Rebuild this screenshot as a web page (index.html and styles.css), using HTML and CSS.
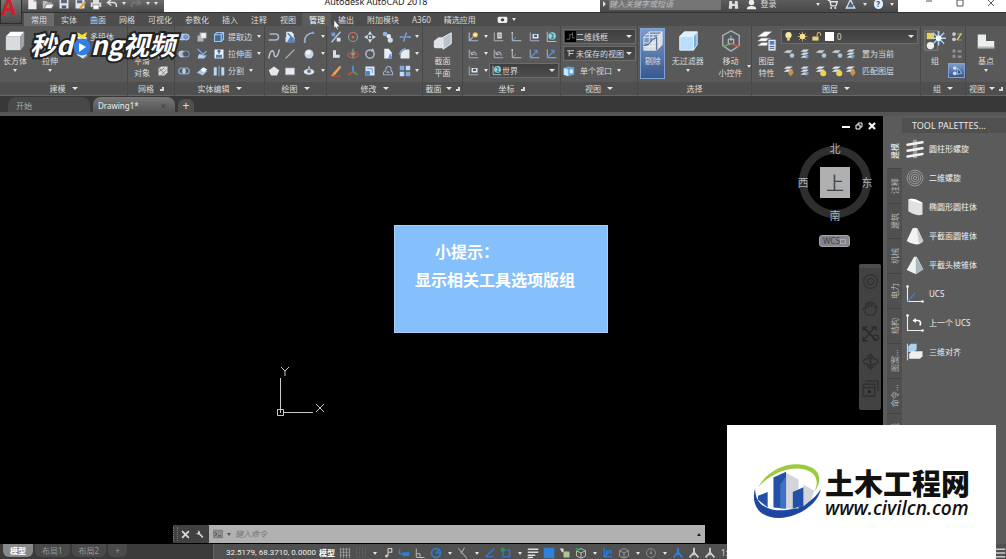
FILE: index.html
```html
<!DOCTYPE html>
<html lang="zh-CN">
<head>
    <meta charset="UTF-8">
    <meta name="viewport" content="width=device-width, initial-scale=1.0">
    <title>Autodesk AutoCAD 2018</title>
    <link rel="stylesheet" href="styles.css">
</head>
<body>
    <!-- icon sprite -->
    <svg class="sprite" xmlns="http://www.w3.org/2000/svg">
        <symbol id="new" viewBox="0 0 16 16"><path d="M3 1h7l4 4v10H3z" fill="#eee"/><path d="M10 1v4h4" fill="#aaa"/></symbol>
        <symbol id="open" viewBox="0 0 16 16"><path d="M1 4h5l2 2h5v8H1z" fill="#bbb"/><path d="M3 14l3-6h10l-3 6z" fill="#f2f2f2" stroke="#666"/></symbol>
        <symbol id="save" viewBox="0 0 16 16"><path d="M2 2h12v12H2z" fill="#dce6f0"/><path d="M4 2h8v5H4z" fill="#667"/><path d="M5 10h6v4H5z" fill="#557"/></symbol>
        <symbol id="saveas" viewBox="0 0 16 16"><path d="M2 2h12v12H2z" fill="#dce6f0"/><path d="M4 3h7v4H4z" fill="#667"/><path d="M7 13l7-9 2 2-7 9z" fill="#e5a437"/></symbol>
        <symbol id="print" viewBox="0 0 16 16"><path d="M4 1h8v5H4zM1 6h14v6H1z" fill="#ddd"/><path d="M4 9h8v6H4z" fill="#fff" stroke="#777"/></symbol>
        <symbol id="undo" viewBox="0 0 16 16"><path d="M3 6h7q4 0 4 6M7 2L2 6l5 4" fill="none" stroke="#ddd" stroke-width="2"/></symbol>
        <symbol id="redo" viewBox="0 0 16 16"><path d="M13 6H6q-4 0-4 6M9 2l5 4-5 4" fill="none" stroke="#777" stroke-width="2"/></symbol>
        <symbol id="find" viewBox="0 0 16 16"><path d="M2 3h4v4h4V3h4l1 11h-5v-4H6v4H1z" fill="#ddd"/></symbol>
        <symbol id="user" viewBox="0 0 16 16"><circle cx="8" cy="5" r="4" fill="#eee"/><path d="M1 15q0-5 7-5t7 5z" fill="#eee"/></symbol>
        <symbol id="cart" viewBox="0 0 16 16"><path d="M1 2h3l2 8h7l2-6H5" fill="none" stroke="#dfe6f2" stroke-width="2"/><circle cx="6" cy="13" r="1.5" fill="#dfe6f2"/><circle cx="12" cy="13" r="1.5" fill="#dfe6f2"/></symbol>
        <symbol id="a360" viewBox="0 0 16 16"><path d="M8 1l6 12H2z" fill="none" stroke="#cfdcf0" stroke-width="2"/><path d="M5 11l8-3" stroke="#3e73c4" stroke-width="2"/></symbol>
        <symbol id="cam" viewBox="0 0 16 16"><rect x="1" y="4" width="14" height="9" rx="2" fill="#eee"/><circle cx="8" cy="8.500" r="2.500" fill="#444"/></symbol>
        <symbol id="cube" viewBox="0 0 24 24"><path d="M2 7l5-5h15l-4 5z" fill="#fff"/><path d="M2 7h16v15H2z" fill="#d9dcdf"/><path d="M18 7l4-5v15l-4 5z" fill="#9da3a9"/></symbol>
        <symbol id="extrude" viewBox="0 0 24 24"><path d="M4 12l6-4h10l-5 4z" fill="#fff"/><path d="M4 12h11v9H4z" fill="#d9dcdf"/><path d="M15 12l5-4v9l-5 4z" fill="#9da3a9"/><path d="M12 8V1" stroke="#6fa8e8" stroke-width="2"/></symbol>
        <symbol id="solid" viewBox="0 0 16 16"><path d="M1 9l5-4 9 4-6 5z" fill="#e9edf0"/><path d="M9 14l6-5v3l-6 3z" fill="#8e979f"/></symbol>
        <symbol id="mesh" viewBox="0 0 16 16"><path d="M2 4l4-2h8v8l-4 4H2z" fill="#d8dcdf"/><path d="M2 9l8-5M5 14l8-8M3 4l8 9" stroke="#777"/></symbol>
        <symbol id="union" viewBox="0 0 16 16"><rect x="1" y="4" width="9" height="8" rx="4" fill="#9cb7da" stroke="#dce8f7"/><rect x="6" y="4" width="9" height="8" rx="4" fill="#6f97cc" stroke="#dce8f7"/></symbol>
        <symbol id="subtract" viewBox="0 0 16 16"><rect x="1" y="4" width="9" height="8" rx="4" fill="#aebfd6" stroke="#dce8f7"/><rect x="6" y="4" width="9" height="8" rx="4" fill="#555" stroke="#8fb0dc"/></symbol>
        <symbol id="intersect" viewBox="0 0 16 16"><rect x="1" y="4" width="9" height="8" rx="4" fill="none" stroke="#8fb0dc" stroke-width="1.500"/><rect x="6" y="4" width="9" height="8" rx="4" fill="none" stroke="#8fb0dc" stroke-width="1.500"/><path d="M8 5v6" stroke="#dce8f7" stroke-width="2"/></symbol>
        <symbol id="interfere" viewBox="0 0 16 16"><path d="M5 2h9v8h-4v4H2V6h3z" fill="#aeb6bf"/><path d="M7 3h6v6H7z" fill="#f1f3f5"/></symbol>
        <symbol id="slice" viewBox="0 0 16 16"><path d="M2 14l2-6 10 2-3 4z" fill="#b8d2ee"/><path d="M2 1l10 10M14 4l-5 5" stroke="#6fa2de" stroke-width="2"/></symbol>
        <symbol id="thicken" viewBox="0 0 16 16"><path d="M1 10l6-4 8 2-6 6z" fill="#a7c8ea"/><path d="M6 6l4-3 5 3-5 4z" fill="#f1f5fa"/></symbol>
        <symbol id="edge" viewBox="0 0 16 16"><path d="M2 5l3-3h9v9l-3 3H2zM2 5h9v9M11 5l3-3" fill="#456a96" stroke="#9fc4ee" stroke-width="1.500"/></symbol>
        <symbol id="face" viewBox="0 0 16 16"><path d="M2 2h12v12H2z" fill="#e8eef5"/><path d="M4 9h8v4H4z" fill="#4e80bf"/><path d="M8 8V3M6 5l2-2 2 2" stroke="#345f9b" stroke-width="1.500" fill="none"/></symbol>
        <symbol id="split" viewBox="0 0 16 16"><path d="M1 3h4v11H1zM11 3h4v11h-4z" fill="#b9d7f5"/><path d="M8 1v14" stroke="#79a9df" stroke-width="1.500"/></symbol>
        <symbol id="pline" viewBox="0 0 16 16"><path d="M2 4h8q4 0 4 4t-4 4H1" fill="none" stroke="#a8b8cb" stroke-width="2"/></symbol>
        <symbol id="hatch" viewBox="0 0 16 16"><path d="M3 1h7l3 3v4H3z" fill="#e4ecf5"/><path d="M5 3l5 5" stroke="#3d79c8" stroke-width="2"/><path d="M2 8h12v7H2z" fill="#d3e3f5"/><path d="M4 15l4-7h4l3 7z" fill="#4c83c9"/></symbol>
        <symbol id="arc" viewBox="0 0 16 16"><path d="M2 14Q2 4 14 2" fill="none" stroke="#9fb4cf" stroke-width="2"/><path d="M1 13h3v3H1zM12 1h3v3h-3z" fill="#7da4d6"/></symbol>
        <symbol id="spline" viewBox="0 0 16 16"><path d="M1 14C3 0 8 3 8 8s5 6 7-6" fill="none" stroke="#b9c7d8" stroke-width="2"/></symbol>
        <symbol id="line" viewBox="0 0 16 16"><path d="M2 14L14 2" stroke="#a9b3be" stroke-width="1.500"/></symbol>
        <symbol id="ball" viewBox="0 0 16 16"><circle cx="8" cy="8" r="6" fill="#c8d5e4"/><circle cx="7" cy="6" r="3" fill="#f1f5f9"/></symbol>
        <symbol id="poly" viewBox="0 0 16 16"><path d="M8 2l7 5-3 7H4L1 7z" fill="#e4e8ec"/></symbol>
        <symbol id="rect" viewBox="0 0 16 16"><path d="M2 4h12v9H2z" fill="#e8ebee" stroke="#aab"/></symbol>
        <symbol id="ellipse" viewBox="0 0 16 16"><ellipse cx="8" cy="9" rx="7" ry="4" fill="#dfe6ee"/><circle cx="8" cy="8" r="2.500" fill="#587493"/><path d="M8 2v3" stroke="#ddd" stroke-width="2"/></symbol>
        <symbol id="trim" viewBox="0 0 16 16"><path d="M14 1L2 15" stroke="#a9c4e5" stroke-width="2"/><path d="M2 2h5v5H2z" fill="#6f9ed8"/><path d="M9 9h5v5H9z" fill="#dce6f2"/></symbol>
        <symbol id="rotate3" viewBox="0 0 16 16"><circle cx="8" cy="8" r="6" fill="none" stroke="#84a0a5" stroke-width="1.500"/><path d="M3 4a6 6 0 0 1 9 0" fill="none" stroke="#cf5848" stroke-width="1.500"/><circle cx="8" cy="8" r="2" fill="#c86a5a"/></symbol>
        <symbol id="move" viewBox="0 0 16 16"><path d="M8 0l3 5H5zM8 16l3-5H5zM0 8l5-3v6zM16 8l-5-3v6z" fill="#c7dbf3"/><circle cx="8" cy="8" r="1.500" fill="#c7dbf3"/></symbol>
        <symbol id="copy" viewBox="0 0 16 16"><circle cx="4" cy="4" r="3" fill="#8eb6e6"/><circle cx="9" cy="7" r="3" fill="#e2e9f1"/><circle cx="11" cy="12" r="3.500" fill="#d2dae3"/></symbol>
        <symbol id="break" viewBox="0 0 16 16"><path d="M1 8h5M10 8h6M10 2L6 14" fill="none" stroke="#7ea5d6" stroke-width="2"/></symbol>
        <symbol id="erase" viewBox="0 0 16 16"><path d="M4 3v10h9V9H8V3z" fill="#d5e1f0"/></symbol>
        <symbol id="gizmo" viewBox="0 0 16 16"><ellipse cx="8" cy="9" rx="7" ry="4" fill="none" stroke="#c55d50" stroke-width="1.500"/><path d="M8 1v13" stroke="#70a36d" stroke-width="2"/><path d="M5 8h6" stroke="#e08a7e" stroke-width="2"/></symbol>
        <symbol id="ring" viewBox="0 0 16 16"><circle cx="8" cy="8" r="5.500" fill="none" stroke="#a9bbcf" stroke-width="2"/><path d="M11 0l3 4-5 1z" fill="#a9bbcf"/></symbol>
        <symbol id="mirror" viewBox="0 0 16 16"><path d="M3 1h6l4 5v8H3z" fill="#e8eef5"/><path d="M8 14l3-7 3 7z" fill="#5d93d6"/></symbol>
        <symbol id="fillet" viewBox="0 0 16 16"><path d="M2 14V9q1-6 8-7h4v12z" fill="#e6e9ed"/><path d="M1 9q1-7 8-8" fill="none" stroke="#7fa9dc" stroke-width="2"/></symbol>
        <symbol id="pencil" viewBox="0 0 16 16"><path d="M3 12L13 1l2 2L6 14z" fill="#e6ab4c"/><path d="M1 15h13M3 12l3 2-4 1z" stroke="#d54c38" fill="#fff"/></symbol>
        <symbol id="axes" viewBox="0 0 16 16"><path d="M8 9V1" stroke="#4c8fd2" stroke-width="2.500"/><path d="M8 9l-6 4" stroke="#c64c3e" stroke-width="2.500"/><path d="M8 9l6 4" stroke="#5a9c4f" stroke-width="2.500"/></symbol>
        <symbol id="scale" viewBox="0 0 16 16"><path d="M2 2h12v12H2z" fill="#dae8f7"/><path d="M2 8h6v6H2z" fill="#4f84c6"/><path d="M4 5h7v6" fill="none" stroke="#4f84c6"/></symbol>
        <symbol id="offset" viewBox="0 0 16 16"><path d="M2 13q-1-4 3-5 0-6 4-6t3 6q3 1 2 5z" fill="none" stroke="#9db0c8" stroke-width="1.500"/><path d="M6 10q2-4 4 0z" fill="none" stroke="#9db0c8"/></symbol>
        <symbol id="array" viewBox="0 0 16 16"><path d="M1 1h6v6H1zM9 9h6v6H9z" fill="#7cabe6"/><path d="M9 1h6v6H9zM1 9h6v6H1z" fill="#c3dbf5"/></symbol>
        <symbol id="section" viewBox="0 0 24 24"><path d="M2 12l5-4h10v9l-4 3H4q-2 0-2-2z" fill="#dfe2e5"/><path d="M12 8l9-5v12l-9 6z" fill="#b9c3cd" stroke="#eef1f4"/></symbol>
        <symbol id="ucs" viewBox="0 0 16 16"><path d="M3 2v11h12" fill="none" stroke="#b8c1cb" stroke-width="1.300"/><path d="M3 13l5-5" stroke="#6f9fd4" stroke-width="1.300"/><circle cx="3" cy="2.500" r="1.200" fill="#ccc"/></symbol>
        <symbol id="ucs-star" viewBox="0 0 16 16"><path d="M3 2v11h12M3 13l5-5" fill="none" stroke="#9fb8d6" stroke-width="1.500"/><circle cx="11" cy="5" r="3.500" fill="#f0c458"/><circle cx="11" cy="5" r="1.500" fill="#fff"/></symbol>
        <symbol id="ucs-turn" viewBox="0 0 16 16"><path d="M3 2v11h12" fill="none" stroke="#a9b3be" stroke-width="1.300"/><path d="M6 8q2-5 6-1v3M5 5l1 4 4-1" fill="none" stroke="#b8c4d2" stroke-width="1.300"/></symbol>
        <symbol id="ucs-view" viewBox="0 0 16 16"><path d="M3 2v11h12" fill="none" stroke="#a9b3be" stroke-width="1.300"/><path d="M6 4h8v6H6z" fill="#e2e6ea"/><path d="M8 5h4v3H8z" fill="#365f93"/></symbol>
        <symbol id="ucs-page" viewBox="0 0 16 16"><path d="M3 2v11h12" fill="none" stroke="#a9b3be" stroke-width="1.300"/><path d="M7 2h6v8H7z" fill="#d9dde1"/><path d="M8 5h4M8 7h4" stroke="#777"/></symbol>
        <symbol id="ucs-globe" viewBox="0 0 16 16"><path d="M3 1v13h12" fill="none" stroke="#b8c1cb" stroke-width="1.300"/><circle cx="9.500" cy="6.500" r="5" fill="#8ed2dc"/><path d="M7 3l4 2-2 5 3-1" fill="none" stroke="#35808a" stroke-width="1.500"/></symbol>
        <symbol id="ucs-blue" viewBox="0 0 16 16"><path d="M3 2v11h12" fill="none" stroke="#a9b3be" stroke-width="1.300"/><path d="M3 13l9-9M8 3h4v4" fill="none" stroke="#5a94dd" stroke-width="1.500"/></symbol>
        <symbol id="wire" viewBox="0 0 16 16"><path d="M0 0h16v16H0z" fill="#000"/><path d="M2 12h5V5h4M11 2v8h3" fill="none" stroke="#888"/></symbol>
        <symbol id="view" viewBox="0 0 16 16"><path d="M0 0h16v16H0z" fill="#3c3c3c"/><path d="M3 4h10M6 4v8M6 8h6" fill="none" stroke="#ccc" stroke-width="1.500"/></symbol>
        <symbol id="viewport" viewBox="0 0 16 16"><path d="M1 4l6-2 8 1v10l-8 2-6-2z" fill="#5ca9df"/><path d="M1 4l6 2v9l-6-2z" fill="#c6e7fa"/><path d="M9 6h4v5H9z" fill="#e9f6ff"/></symbol>
        <symbol id="cull" viewBox="0 0 24 24"><path d="M2 8l6-6h14v14l-6 6H2z" fill="#7f97bd"/><path d="M2 22V17l5-1 4-5 5-3 6-6v14l-6 6z" fill="#d4d8dd"/><path d="M2 8h14v14H2zM2 8l6-6h14v14l-6 6M16 8l6-6M8 2v20M12 5v17M2 14h14l6-6M4 5h15v14M2 18h14" fill="none" stroke="#eef3f9" stroke-width=".8"/><path d="M16 8v14M2 17l5-1 4-5 5-3" fill="none" stroke="#334f7c"/></symbol>
        <symbol id="nofilter" viewBox="0 0 24 24"><path d="M3 7l5-5h14l-4 5z" fill="#d8f0ff"/><path d="M3 7h15v15H3z" fill="#b9defa"/><path d="M18 7l4-5v14l-4 6z" fill="#79add9"/><path d="M3 7h15v15H3zM3 7l5-5h14v14l-4 6M18 7l4-5" fill="none" stroke="#eef8ff"/></symbol>
        <symbol id="gizmo-big" viewBox="0 0 24 24"><path d="M12 1l9 5v11l-9 6-9-6V6z" fill="none" stroke="#aab2ba" stroke-width="1.500"/><path d="M12 12V6" stroke="#77a7df" stroke-width="1.500"/><path d="M9 10h6v5H9z" fill="none" stroke="#ddd"/><path d="M12 15l-9 3" stroke="#6ca461" stroke-width="2"/><path d="M12 15l9 3" stroke="#c75a48" stroke-width="2"/></symbol>
        <symbol id="layers" viewBox="0 0 24 24"><path d="M2 7l7-5h8l-6 5zM2 12l4-3h10l-5 3zM2 17l4-3h10l-5 3z" fill="#fff" stroke="#bbb" stroke-width=".5"/><path d="M13 10h9v13h-9z" fill="#dce8f5" stroke="#555"/><path d="M15 12h5v4h-5z" fill="#4c83c3"/><path d="M15 18h5M15 20h5" stroke="#557"/></symbol>
        <symbol id="bulb" viewBox="0 0 16 16"><circle cx="8" cy="6" r="4.500" fill="#f8e79c"/><path d="M6 9h4v5H6z" fill="#d6cba0"/></symbol>
        <symbol id="sun" viewBox="0 0 16 16"><path d="M8 1v14M1 8h14M3 3l10 10M13 3L3 13" stroke="#d8c77a"/><circle cx="8" cy="8" r="4" fill="#f7e28a"/></symbol>
        <symbol id="lock" viewBox="0 0 16 16"><path d="M2 8h9v6H2z" fill="#e9cf79"/><path d="M9 8V4q2-4 5 0v3" fill="none" stroke="#cbb975" stroke-width="1.500"/></symbol>
        <symbol id="lay-a" viewBox="0 0 16 16"><path d="M1 6l4-3h8l-4 4z" fill="#c3c9cf"/><circle cx="12" cy="10" r="3" fill="#a9c8e6"/></symbol>
        <symbol id="lay-b" viewBox="0 0 16 16"><path d="M2 5l4-3h7l-3 3zM2 9l4-3h7l-3 3zM2 13l4-3h7l-3 3z" fill="#d6dee7"/><path d="M9 7l4 5-4 3z" fill="#6a9ed8"/></symbol>
        <symbol id="lay-c" viewBox="0 0 16 16"><path d="M1 5l4-3h8l-4 3zM1 9l4-3h8l-4 3z" fill="#e3e6e9"/><circle cx="11" cy="11" r="4" fill="#e9d552"/></symbol>
        <symbol id="lay-d" viewBox="0 0 16 16"><path d="M1 5l4-3h8l-4 3zM1 9l4-3h8l-4 3z" fill="#e3e6e9"/><path d="M8 7h5l1 4-4 4-3-4z" fill="#cf9048"/></symbol>
        <symbol id="group" viewBox="0 0 24 24"><path d="M1 1h14v21H1z" fill="#555" stroke="#8a8a8a"/><path d="M3 3h8v7H3z" fill="#e8cf63"/><circle cx="7" cy="17" r="4" fill="#eef1f4"/><path d="M16 1v16M8 9h16M10 3l12 12M22 3L10 15" stroke="#a5d3fb" stroke-width="1.500"/><circle cx="16" cy="9" r="3" fill="#fff"/></symbol>
        <symbol id="ungroup" viewBox="0 0 16 16"><circle cx="4" cy="4" r="2.500" fill="#c9cdd1"/><circle cx="4" cy="11" r="2.500" fill="#c9cdd1"/><path d="M8 12l6-9" stroke="#dcc65e" stroke-width="2"/><path d="M8 4h5M9 12h5" stroke="#aaa"/></symbol>
        <symbol id="groupedit" viewBox="0 0 16 16"><path d="M2 2h4v4H2zM2 9h4v4H2zM9 3h5v3H9zM9 10h5v3H9z" fill="#8c939a"/></symbol>
        <symbol id="groupsel" viewBox="0 0 16 16"><circle cx="5" cy="4" r="2.500" fill="#bfe0ff"/><circle cx="5" cy="11" r="2.500" fill="#bfe0ff"/><path d="M9 4l5 7-3 0-2 2z" fill="#16324f" stroke="#cce6ff"/></symbol>
        <symbol id="base" viewBox="0 0 24 24"><path d="M3 5h9v7h9v8H3z" fill="#eceded"/><path d="M3 18h18v2H3z" fill="#b5b8bb"/></symbol>
        <symbol id="helix" viewBox="0 0 24 24"><path d="M12 1v22" stroke="#9a9a9a" stroke-width="5"/><path d="M3 7l18-3M3 14l18-3M3 21l18-3" stroke="#f3f3f3" stroke-width="3" stroke-linecap="round"/></symbol>
        <symbol id="spiral" viewBox="0 0 24 24"><g fill="none" stroke="#a3a5a6"><circle cx="12" cy="12" r="9.500"/><circle cx="12" cy="12" r="7"/><circle cx="12" cy="12" r="4.500"/><circle cx="12" cy="12" r="2"/></g></symbol>
        <symbol id="cylinder" viewBox="0 0 24 24"><path d="M4 3q4-2 9 0t8 4v14q-4 2-9 0t-8-4z" fill="#dfe1e3"/><path d="M4 3q4-2 9 0t8 4q-4 1-9-1T4 3z" fill="#fff"/></symbol>
        <symbol id="cone" viewBox="0 0 24 24"><path d="M9 3q3-2 6 0l7 15q-4 5-10 4T2 18z" fill="#f0f1f1"/><path d="M14 3l8 15-5 3z" fill="#c6c9cb"/></symbol>
        <symbol id="pyramid" viewBox="0 0 24 24"><path d="M11 2L2 18l11 5 9-6L14 2z" fill="#eef1f1"/><path d="M13 2l0 21 9-6z" fill="#aab8bd"/></symbol>
        <symbol id="ucs-big" viewBox="0 0 24 24"><path d="M3 2v19h19" fill="none" stroke="#eee" stroke-width="1.300"/><path d="M3 21l9-10" stroke="#4d7dc7" stroke-width="1.500"/><circle cx="3" cy="3" r="1.500" fill="#fff"/><circle cx="21" cy="21" r="1.500" fill="#fff"/></symbol>
        <symbol id="ucs-prev" viewBox="0 0 24 24"><path d="M3 2v19h19" fill="none" stroke="#eee" stroke-width="1.300"/><path d="M12 9h4q4 1 2 6" fill="none" stroke="#fff" stroke-width="2"/><path d="M9 9l4-3v6z" fill="#fff"/><circle cx="3" cy="3" r="1.500" fill="#fff"/><circle cx="21" cy="21" r="1.500" fill="#fff"/></symbol>
        <symbol id="align3" viewBox="0 0 24 24"><path d="M3 2v20" stroke="#ccc" stroke-width="1.500"/><path d="M4 5l3-3h7v7l-3 3H4z" fill="#a7d0f2"/><path d="M5 14l3-3h13v6l-3 3H5z" fill="#eceef0"/></symbol>
        <symbol id="wheel" viewBox="0 0 16 16"><g fill="none" stroke="#303030" stroke-width="1.200"><circle cx="8" cy="8" r="6.500"/><circle cx="8" cy="8" r="3"/></g></symbol>
        <symbol id="pan" viewBox="0 0 16 16"><path d="M4 14L1 8l2-1 1 2V3h2v4l1-5h2v5l1-4h2v4l2-1-1 5-2 3z" fill="none" stroke="#303030" stroke-width="1.200"/></symbol>
        <symbol id="zoomx" viewBox="0 0 16 16"><path d="M2 2l11 11M12 1L2 13M1 5V1h4M9 1h4v3M1 10v4h4" fill="none" stroke="#2b2b2b" stroke-width="1.500"/><circle cx="13" cy="11" r="2.500" fill="none" stroke="#2b2b2b"/></symbol>
        <symbol id="orbit" viewBox="0 0 16 16"><path d="M8 1v14M5 4l3-3 3 3M5 12l3 3 3-3" fill="none" stroke="#303030" stroke-width="1.500"/><ellipse cx="8" cy="8" rx="7" ry="3" fill="none" stroke="#303030" stroke-width="1.300"/></symbol>
        <symbol id="motion" viewBox="0 0 16 16"><path d="M1 4h11v11H1zM3 1h12v9M1 7h11" fill="none" stroke="#303030" stroke-width="1.300"/><circle cx="7" cy="11" r="1.500" fill="#222"/></symbol>
        <symbol id="wrench" viewBox="0 0 16 16"><path d="M2 5a4 4 0 0 0 5 3l6 6 2-2-6-6A4 4 0 0 0 5 1l1 3-2 2z" fill="#d5d5d5"/></symbol>
        <symbol id="prompt" viewBox="0 0 16 16"><path d="M1 2h14v12H1z" fill="#8e8e8e" stroke="#666"/><path d="M3 5l3 3-3 3M8 11h5" fill="none" stroke="#444" stroke-width="1.500"/></symbol>
        <symbol id="grid" viewBox="0 0 16 16"><path d="M2 1v14M6 1v14M10 1v14M14 1v14M1 3h14M1 7h14M1 11h14" stroke="#a0a0a0"/></symbol>
        <symbol id="snap" viewBox="0 0 16 16"><path d="M2 1v14M6 1v14M10 1v14M14 1v14" stroke="#7d7d7d" stroke-dasharray="1 2"/></symbol>
        <symbol id="infer" viewBox="0 0 16 16"><path d="M8 2v10M8 2h5v5H8" fill="none" stroke="#ccc" stroke-width="1.500"/><circle cx="6" cy="12" r="2" fill="#ccc"/></symbol>
        <symbol id="dyn" viewBox="0 0 16 16"><path d="M2 3v6h4" fill="none" stroke="#2a7fd6" stroke-width="2"/><path d="M6 7h9v5H6z" fill="#2a7fd6"/></symbol>
        <symbol id="ortho" viewBox="0 0 16 16"><path d="M3 2v12h11M3 9h5v5" fill="none" stroke="#bbb" stroke-width="1.300"/></symbol>
        <symbol id="polar" viewBox="0 0 16 16"><circle cx="8" cy="8" r="6" fill="none" stroke="#2a80dc" stroke-width="2"/><path d="M8 8l5-5M8 8h6" stroke="#2a80dc" stroke-width="1.500"/></symbol>
        <symbol id="iso" viewBox="0 0 16 16"><path d="M2 2l11 13M10 1L5 9" stroke="#aaa" stroke-width="1.500"/></symbol>
        <symbol id="track" viewBox="0 0 16 16"><path d="M2 13L14 2M2 13h11" stroke="#2a80dc" stroke-width="1.500"/></symbol>
        <symbol id="osnap" viewBox="0 0 16 16"><path d="M4 4h9v9H4z" fill="none" stroke="#2a80dc" stroke-width="1.500"/><path d="M1 1h5v5H1z" fill="#2f9447"/></symbol>
        <symbol id="lwt" viewBox="0 0 16 16"><path d="M1 3h14M1 7h14M1 11h10M1 14h7" stroke="#ddd" stroke-width="2"/></symbol>
        <symbol id="transp" viewBox="0 0 16 16"><path d="M1 1h14v14H1z" fill="#2f80d8"/></symbol>
        <symbol id="cycle" viewBox="0 0 16 16"><path d="M6 6h8v8H6z" fill="#a5c987"/><path d="M1 2h5v5H4z" fill="#ddd"/></symbol>
        <symbol id="osnap3" viewBox="0 0 16 16"><path d="M8 2l6 3v7l-6 3-6-3V5zM2 5l6 3 6-3M8 8v7" fill="none" stroke="#bbb" stroke-width="1.300"/><path d="M1 1h4v4H1z" fill="#2f9447"/></symbol>
        <symbol id="ducs" viewBox="0 0 16 16"><path d="M3 1v12h11M6 10V5h6v5M3 13l6-6" fill="none" stroke="#2a80dc" stroke-width="1.500"/></symbol>
        <symbol id="filter" viewBox="0 0 16 16"><path d="M8 2l6 3v7l-6 3-6-3V5zM2 5l6 3 6-3M8 8v7" fill="none" stroke="#999" stroke-width="1.300"/></symbol>
        <symbol id="gizmo-s" viewBox="0 0 16 16"><circle cx="8" cy="8" r="6" fill="none" stroke="#999"/><path d="M8 8V2" stroke="#c55" stroke-width="1.500"/><circle cx="8" cy="8" r="1.500" fill="#6a6"/></symbol>
        <symbol id="anno" viewBox="0 0 16 16"><path d="M8 1v6L2 14M8 7l6 7M8 7v4" fill="none" stroke="currentColor" stroke-width="2.500"/></symbol>
        <symbol id="menu" viewBox="0 0 16 16"><path d="M1 3h14M1 8h14M1 13h14" stroke="#ccc" stroke-width="2"/></symbol>
    </svg>

    <header class="titlebar">
        <button class="app-button" aria-label="应用程序菜单">A</button>
        <div class="quick">
            <button class="ico" aria-label="新建"><svg><use href="#new"/></svg></button>
            <button class="ico" aria-label="打开"><svg><use href="#open"/></svg></button>
            <button class="ico" aria-label="保存"><svg><use href="#save"/></svg></button>
            <button class="ico" aria-label="另存为"><svg><use href="#saveas"/></svg></button>
            <button class="ico" aria-label="打印"><svg><use href="#print"/></svg></button>
            <button class="ico" aria-label="放弃"><svg><use href="#undo"/></svg></button>
            <span class="arrow"></span>
            <button class="ico" aria-label="重做"><svg><use href="#redo"/></svg></button>
            <span class="arrow"></span>
            <span class="arrow"></span>
        </div>
        <h1 class="app-title">Autodesk AutoCAD 2018</h1>
        <div class="info">
            <span class="play"></span>
            <input class="search" type="text" placeholder="键入关键字或短语" aria-label="搜索">
            <button class="ico" aria-label="查找"><svg><use href="#find"/></svg></button>
            <button class="login"><svg><use href="#user"/></svg>登录</button>
            <span class="arrow"></span>
            <button class="ico" aria-label="购物车"><svg><use href="#cart"/></svg></button>
            <button class="ico" aria-label="保持连接"><svg><use href="#a360"/></svg></button>
            <span class="arrow"></span>
            <button class="help" aria-label="帮助">?</button>
            <span class="arrow"></span>
        </div>
        <div class="window-buttons">
            <button aria-label="最小化"><svg viewBox="0 0 8 8"><path d="M1 2h6" stroke="#555"/></svg></button>
            <button aria-label="最大化"><svg viewBox="0 0 8 8"><path d="M1 1h6v6H1z" fill="none" stroke="#555"/></svg></button>
            <button aria-label="关闭"><svg viewBox="0 0 8 8"><path d="M1 1l6 6M7 1L1 7" stroke="#555"/></svg></button>
        </div>
    </header>

    <nav class="ribbon-tabs">
        <a class="active" href="#">常用</a>
        <a href="#">实体</a>
        <a href="#">曲面</a>
        <a href="#">网格</a>
        <a href="#">可视化</a>
        <a href="#">参数化</a>
        <a href="#">插入</a>
        <a href="#">注释</a>
        <a href="#">视图</a>
        <a class="hover" href="#">管理</a>
        <a href="#">输出</a>
        <a href="#">附加模块</a>
        <a href="#">A360</a>
        <a href="#">精选应用</a>
        <button class="cam" aria-label="录制"><svg><use href="#cam"/></svg><span class="arrow"></span></button>
        <svg class="cursor" viewBox="0 0 8 12"><path d="M1 0v10l2-2 2 4 1-1-1-3h3z" fill="#fff" stroke="#333" stroke-width=".5"/></svg>
    </nav>

    <section class="ribbon">
        <div class="panel modeling">
            <div class="panel-body">
                <button class="big"><svg><use href="#cube"/></svg>长方体<span class="arrow"></span></button>
                <button class="big"><svg><use href="#extrude"/></svg>拉伸<span class="arrow"></span></button>
                <div class="tools">
                    <button class="ico" aria-label="多段体图标"><svg><use href="#solid"/></svg></button>
                    <button class="text">多段体</button>
                    <button class="ico" aria-label="按住并拖动"><svg><use href="#solid"/></svg></button>
                </div>
            </div>
            <h2>建模<span class="arrow"></span></h2>
        </div>
        <div class="panel mesh">
            <div class="panel-body">
                <button class="big"><svg><use href="#mesh"/></svg>平滑<br>对象</button>
                <div class="tools">
                    <button class="ico" aria-label="提高平滑度"><svg><use href="#mesh"/></svg></button>
                    <button class="ico" aria-label="降低平滑度"><svg><use href="#mesh"/></svg></button>
                    <button class="ico" aria-label="优化网格"><svg><use href="#mesh"/></svg></button>
                </div>
            </div>
            <h2>网格<span class="launch"></span></h2>
        </div>
        <div class="panel solid-edit">
            <div class="panel-body tools">
                <button class="ico" aria-label="并集"><svg><use href="#union"/></svg></button>
                <button class="ico" aria-label="干涉"><svg><use href="#interfere"/></svg></button>
                <button class="ico" aria-label="边"><svg><use href="#edge"/></svg></button>
                <button class="text">提取边<span class="arrow"></span></button>
                <button class="ico" aria-label="差集"><svg><use href="#subtract"/></svg></button>
                <button class="ico" aria-label="剖切"><svg><use href="#slice"/></svg></button>
                <button class="ico" aria-label="面"><svg><use href="#face"/></svg></button>
                <button class="text">拉伸面<span class="arrow"></span></button>
                <button class="ico" aria-label="交集"><svg><use href="#intersect"/></svg></button>
                <button class="ico" aria-label="加厚"><svg><use href="#thicken"/></svg></button>
                <button class="ico" aria-label="实体"><svg><use href="#split"/></svg></button>
                <button class="text">分割<span class="arrow"></span></button>
            </div>
            <h2>实体编辑<span class="arrow"></span></h2>
        </div>
        <div class="panel draw">
            <div class="panel-body tools">
                <button class="ico" aria-label="多段线"><svg><use href="#pline"/></svg></button>
                <button class="ico" aria-label="图案填充"><svg><use href="#hatch"/></svg></button>
                <button class="ico" aria-label="圆弧"><svg><use href="#arc"/></svg></button>
                <span class="arrow"></span>
                <button class="ico" aria-label="样条曲线"><svg><use href="#spline"/></svg></button>
                <button class="ico" aria-label="直线"><svg><use href="#line"/></svg></button>
                <button class="ico" aria-label="圆"><svg><use href="#ball"/></svg></button>
                <span class="arrow"></span>
                <button class="ico" aria-label="多边形"><svg><use href="#poly"/></svg></button>
                <button class="ico" aria-label="矩形"><svg><use href="#rect"/></svg></button>
                <button class="ico" aria-label="椭圆"><svg><use href="#ellipse"/></svg></button>
                <span class="arrow"></span>
            </div>
            <h2>绘图<span class="arrow"></span></h2>
        </div>
        <div class="panel modify">
            <div class="panel-body tools">
                <button class="ico" aria-label="修剪"><svg><use href="#trim"/></svg></button>
                <button class="ico" aria-label="三维旋转"><svg><use href="#rotate3"/></svg></button>
                <button class="ico" aria-label="移动"><svg><use href="#move"/></svg></button>
                <button class="ico" aria-label="复制"><svg><use href="#copy"/></svg></button>
                <button class="ico" aria-label="打断"><svg><use href="#break"/></svg></button>
                <span class="arrow"></span>
                <button class="ico" aria-label="拉伸对象"><svg><use href="#erase"/></svg></button>
                <button class="ico" aria-label="三维移动"><svg><use href="#gizmo"/></svg></button>
                <button class="ico" aria-label="旋转"><svg><use href="#ring"/></svg></button>
                <button class="ico" aria-label="镜像"><svg><use href="#mirror"/></svg></button>
                <button class="ico" aria-label="圆角"><svg><use href="#fillet"/></svg></button>
                <span class="arrow"></span>
                <button class="ico" aria-label="删除"><svg><use href="#pencil"/></svg></button>
                <button class="ico" aria-label="三维对齐工具"><svg><use href="#axes"/></svg></button>
                <button class="ico" aria-label="缩放"><svg><use href="#scale"/></svg></button>
                <button class="ico" aria-label="偏移"><svg><use href="#offset"/></svg></button>
                <button class="ico" aria-label="阵列"><svg><use href="#array"/></svg></button>
                <span class="arrow"></span>
            </div>
            <h2>修改<span class="arrow"></span></h2>
        </div>
        <div class="panel section">
            <div class="panel-body">
                <button class="big"><svg><use href="#section"/></svg>截面<br>平面</button>
            </div>
            <h2>截面<span class="arrow"></span><span class="launch"></span></h2>
        </div>
        <div class="panel coords">
            <div class="panel-body tools">
                <button class="ico" aria-label="原点"><svg><use href="#ucs-star"/></svg></button>
                <span class="arrow"></span>
                <button class="ico" aria-label="命名 UCS"><svg><use href="#ucs-page"/></svg></button>
                <button class="ico" aria-label="UCS"><svg><use href="#ucs"/></svg></button>
                <button class="ico" aria-label="视图 UCS"><svg><use href="#ucs-view"/></svg></button>
                <button class="ico" aria-label="世界 UCS"><svg><use href="#ucs-globe"/></svg></button>
                <button class="ico" aria-label="绕轴旋转"><svg><use href="#ucs-turn"/></svg></button>
                <span class="arrow"></span>
                <button class="ico" aria-label="上一个"><svg><use href="#ucs-turn"/></svg></button>
                <button class="ico" aria-label="面 UCS"><svg><use href="#ucs"/></svg></button>
                <button class="ico" aria-label="三点"><svg><use href="#ucs-blue"/></svg></button>
                <button class="ico" aria-label="Z 轴矢量"><svg><use href="#ucs-blue"/></svg></button>
                <button class="ico" aria-label="对象 UCS"><svg><use href="#ucs-view"/></svg></button>
                <span class="arrow"></span>
                <label class="drop"><svg><use href="#ucs-globe"/></svg><select aria-label="坐标系"><option>世界</option></select><span class="arrow"></span></label>
            </div>
            <h2>坐标<span class="launch"></span></h2>
        </div>
        <div class="panel view">
            <div class="panel-body tools">
                <label class="drop"><svg><use href="#wire"/></svg><select aria-label="视觉样式"><option>二维线框</option></select><span class="arrow"></span></label>
                <label class="drop"><svg><use href="#view"/></svg><select aria-label="三维导航"><option>未保存的视图</option></select><span class="arrow"></span></label>
                <button class="text"><svg><use href="#viewport"/></svg>单个视口<span class="arrow"></span></button>
            </div>
            <h2>视图<span class="arrow"></span></h2>
        </div>
        <div class="panel select">
            <div class="panel-body">
                <button class="big pressed"><svg><use href="#cull"/></svg>剔除</button>
                <button class="big"><svg><use href="#nofilter"/></svg>无过滤器<span class="arrow"></span></button>
                <button class="big"><svg><use href="#gizmo-big"/></svg>移动<br>小控件</button>
                <span class="arrow"></span>
            </div>
            <h2>选择</h2>
        </div>
        <div class="panel layer">
            <div class="panel-body">
                <button class="big"><svg><use href="#layers"/></svg>图层<br>特性</button>
                <div class="tools">
                    <label class="drop">
                        <svg><use href="#bulb"/></svg><svg><use href="#sun"/></svg><svg><use href="#lock"/></svg>
                        <span class="swatch"></span>
                        <select aria-label="图层"><option>0</option></select><span class="arrow"></span>
                    </label>
                    <button class="ico" aria-label="关闭图层"><svg><use href="#lay-a"/></svg></button>
                    <button class="ico" aria-label="隔离"><svg><use href="#lay-b"/></svg></button>
                    <button class="ico" aria-label="冻结"><svg><use href="#lay-a"/></svg></button>
                    <button class="ico" aria-label="锁定"><svg><use href="#lay-a"/></svg></button>
                    <button class="text"><svg><use href="#lay-b"/></svg>置为当前</button>
                    <button class="ico" aria-label="打开图层"><svg><use href="#lay-d"/></svg></button>
                    <button class="ico" aria-label="取消隔离"><svg><use href="#lay-b"/></svg></button>
                    <button class="ico" aria-label="解冻"><svg><use href="#lay-c"/></svg></button>
                    <button class="ico" aria-label="解锁"><svg><use href="#lay-c"/></svg></button>
                    <button class="text"><svg><use href="#lay-d"/></svg>匹配图层</button>
                </div>
            </div>
            <h2>图层<span class="arrow"></span></h2>
        </div>
        <div class="panel group">
            <div class="panel-body">
                <button class="big"><svg><use href="#group"/></svg>组</button>
                <div class="tools">
                    <button class="ico" aria-label="解除编组"><svg><use href="#ungroup"/></svg></button>
                    <button class="ico" aria-label="组编辑"><svg><use href="#groupedit"/></svg></button>
                    <button class="ico pressed" aria-label="启用组选择"><svg><use href="#groupsel"/></svg></button>
                </div>
            </div>
            <h2>组<span class="arrow"></span></h2>
        </div>
        <div class="panel base">
            <div class="panel-body">
                <button class="big"><svg><use href="#base"/></svg>基点<span class="arrow"></span></button>
            </div>
            <h2>视图<span class="arrow"></span><span class="launch"></span></h2>
        </div>
    </section>

    <nav class="file-tabs">
        <a href="#">开始</a>
        <a class="active" href="#">Drawing1*<span>✕</span></a>
        <button aria-label="新图形">+</button>
    </nav>

    <main class="workspace">
        <div class="canvas">
            <div class="doc-buttons">
                <button aria-label="最小化图形"><svg viewBox="0 0 8 8"><path d="M0 5h8" stroke="#fff" stroke-width="2"/></svg></button>
                <button aria-label="还原图形"><svg viewBox="0 0 8 8"><path d="M1 3h4v4H1zM3 3V1h4v4H5" fill="none" stroke="#fff"/></svg></button>
                <button aria-label="关闭图形"><svg viewBox="0 0 8 8"><path d="M1 1l6 6M7 1L1 7" stroke="#fff" stroke-width="2"/></svg></button>
            </div>

            <div class="viewcube">
                <span class="north">北</span>
                <span class="west">西</span>
                <button class="top">上</button>
                <span class="east">东</span>
                <span class="south">南</span>
            </div>
            <button class="wcs">WCS<span></span></button>

            <div class="navbar">
                <button aria-label="控制盘"><svg><use href="#wheel"/></svg></button>
                <button aria-label="平移"><svg><use href="#pan"/></svg></button>
                <button aria-label="范围缩放"><svg><use href="#zoomx"/></svg></button>
                <button aria-label="动态观察"><svg><use href="#orbit"/></svg></button>
                <button aria-label="运动"><svg><use href="#motion"/></svg></button>
            </div>

            <svg class="ucs-icon" viewBox="0 0 50 54">
                <path d="M5.500 12v35M9 46.500h29M2.500 43.500h6v6h-6z" fill="none" stroke="#c9c9c9"/>
                <path d="M6 1l4 4 4-4M10 5v5M41 38l8 8M49 38l-8 8" fill="none" stroke="#c9c9c9"/>
            </svg>

            <div class="hint">
                <p class="hint-title">小提示：</p>
                <p>显示相关工具选项版组</p>
            </div>

            <div class="command">
                <span class="grip"></span>
                <button aria-label="关闭命令行"><svg viewBox="0 0 8 8"><path d="M1 1l6 6M7 1L1 7" stroke="#ddd" stroke-width="1.500"/></svg></button>
                <button aria-label="自定义"><svg><use href="#wrench"/></svg></button>
                <div class="command-line">
                    <svg><use href="#prompt"/></svg>
                    <span class="arrow"></span>
                    <input type="text" placeholder="键入命令" aria-label="命令">
                    <span class="arrow up"></span>
                </div>
            </div>
        </div>

        <aside class="palette">
            <h2>TOOL PALETTES...</h2>
            <div class="palette-body">
                <nav class="palette-tabs">
                    <a class="active" href="#">建模</a>
                    <a href="#">注释</a>
                    <a href="#">建筑</a>
                    <a href="#">机械</a>
                    <a href="#">电力</a>
                    <a href="#">结构</a>
                    <a href="#">图案...</a>
                    <a href="#">命令...</a>
                    <a href="#">引线</a>
                </nav>
                <ul>
                    <li><svg><use href="#helix"/></svg>圆柱形螺旋</li>
                    <li><svg><use href="#spiral"/></svg>二维螺旋</li>
                    <li><svg><use href="#cylinder"/></svg>椭圆形圆柱体</li>
                    <li><svg><use href="#cone"/></svg>平截面圆锥体</li>
                    <li><svg><use href="#pyramid"/></svg>平截头棱锥体</li>
                    <li><svg><use href="#ucs-big"/></svg>UCS</li>
                    <li><svg><use href="#ucs-prev"/></svg>上一个 UCS</li>
                    <li><svg><use href="#align3"/></svg>三维对齐</li>
                </ul>
            </div>
        </aside>
    </main>

    <footer class="statusbar">
        <nav class="layout-tabs">
            <a class="active" href="#">模型</a>
            <a href="#">布局1</a>
            <a href="#">布局2</a>
            <a href="#">+</a>
        </nav>
        <div class="status">
            <span class="position">32.5179, 68.3710, 0.0000</span>
            <button class="model">模型</button>
            <button aria-label="栅格"><svg><use href="#grid"/></svg></button>
            <button aria-label="捕捉"><svg><use href="#snap"/></svg></button>
            <span class="arrow"></span>
            <button aria-label="推断约束"><svg><use href="#infer"/></svg></button>
            <button aria-label="动态输入"><svg><use href="#dyn"/></svg></button>
            <button aria-label="正交"><svg><use href="#ortho"/></svg></button>
            <button aria-label="极轴追踪"><svg><use href="#polar"/></svg></button>
            <span class="arrow"></span>
            <button aria-label="等轴测草图"><svg><use href="#iso"/></svg></button>
            <span class="arrow"></span>
            <button aria-label="对象捕捉追踪"><svg><use href="#track"/></svg></button>
            <button aria-label="对象捕捉"><svg><use href="#osnap"/></svg></button>
            <span class="arrow"></span>
            <button aria-label="线宽"><svg><use href="#lwt"/></svg></button>
            <button aria-label="透明度"><svg><use href="#transp"/></svg></button>
            <button aria-label="选择循环"><svg><use href="#cycle"/></svg></button>
            <button aria-label="三维对象捕捉"><svg><use href="#osnap3"/></svg></button>
            <span class="arrow"></span>
            <button aria-label="动态 UCS"><svg><use href="#ducs"/></svg></button>
            <button aria-label="选择过滤"><svg><use href="#filter"/></svg></button>
            <span class="arrow"></span>
            <button aria-label="小控件"><svg><use href="#gizmo-s"/></svg></button>
            <span class="arrow"></span>
            <button class="on" aria-label="注释可见性"><svg><use href="#anno"/></svg></button>
            <button aria-label="自动缩放"><svg><use href="#anno"/></svg></button>
            <button aria-label="注释比例"><svg><use href="#anno"/></svg></button>
            <span class="ratio">1:1</span>
            <button class="customize" aria-label="自定义状态栏"><svg><use href="#menu"/></svg></button>
        </div>
    </footer>

    <!-- video watermark -->
    <div class="watermark">
        <span>秒d</span>
        <svg viewBox="0 0 18 24"><circle cx="9" cy="15" r="8.500" fill="#2e7fe6" stroke="none"/><path d="M6 11l7 4-7 5z" fill="#fff" stroke="none"/><path d="M4 0l5 3 5-3-1 4-4 3-4-3z" fill="#f8e02c" stroke="none"/></svg>
        <span>ng视频</span>
    </div>

    <!-- site logo -->
    <div class="site-logo">
        <svg viewBox="0 0 72 60">
            <path d="M6 25C18 4 44-4 62 5c10 6 9 17 2 25 5-9 3-17-4-21C45 1 22 8 6 25z" fill="#9bcb3c"/>
            <path d="M3 26C-2 44 8 57 28 57c20-1 40-14 43-30-8 14-25 22-42 22C14 49 3 42 3 26z" fill="#1d46a0"/>
            <path d="M35 10l13 7v30H35zM53 22l11 7-3 9-8 7z" fill="#d3d5da"/>
            <path d="M22 15l13-6v38l-13-1zM6 34l10-4v16L6 38zM42 30l11-5v19l-11 3z" fill="#2450a8"/>
            <path d="M29 22l6-8v33h-6z" fill="#3d72c4"/>
        </svg>
        <div>
            <strong>土木工程网</strong>
            <a href="#">www.civilcn.com</a>
        </div>
    </div>
</body>
</html>
```
FILE: styles.css
```css
*, *::before {
    box-sizing: border-box;
}
body {
    display: flex;
    flex-direction: column;
    height: 100vh;
    margin: 0;
    overflow: hidden;
    background: #000;
    color: #dcdcdc;
    font: 8px/12px "Noto Sans", "Noto Sans CJK SC", sans-serif;
}
h1, h2, p, ul {
    margin: 0;
    padding: 0;
}
h1, h2 {
    font-weight: normal;
}
ul {
    list-style: none;
}
a {
    color: inherit;
    text-decoration: none;
}
button, input, select {
    margin: 0;
    padding: 0;
    border: none;
    background: none;
    color: inherit;
    font: inherit;
    white-space: nowrap;
}
svg {
    display: block;
    flex: none;
}
.sprite {
    position: absolute;
    width: 0;
    height: 0;
}
.arrow {
    flex: none;
    width: 0;
    height: 0;
    border: 2px solid transparent;
    border-top: 3px solid #e4e4e4;
    border-bottom: none;
}
.arrow.up {
    border-top: none;
    border-bottom: 3px solid #222;
}
.launch {
    width: 4px;
    height: 4px;
    border-right: 2px solid #d8d8d8;
    border-bottom: 2px solid #d8d8d8;
}
.ico {
    display: flex;
    align-items: center;
    justify-content: center;
}
.ico svg {
    width: 12px;
    height: 12px;
}

/* title bar */
.titlebar {
    position: relative;
    display: flex;
    flex: none;
    align-items: flex-end;
    height: 12px;
    background: #fff;
}
.app-button {
    position: absolute;
    left: 0;
    top: 0;
    z-index: 2;
    width: 22px;
    height: 24px;
    padding-bottom: 12px;
    border: 1px solid #2e2e2e;
    border-top: none;
    background: linear-gradient(#777, #4a4a4a);
    color: #c8232c;
    font-size: 22px;
    font-weight: bold;
    line-height: 12px;
    text-align: left;
}
.quick {
    display: flex;
    align-items: center;
    gap: 4px;
    width: 164px;
    height: 12px;
    padding: 0 0 5px 26px;
    background: linear-gradient(#6a6a6a, #4a4a4a);
}
.app-title {
    flex: 1;
    height: 21px;
    padding-right: 12px;
    color: #222;
    font-size: 9px;
    line-height: 21px;
    text-align: center;
}
.info {
    display: flex;
    align-items: center;
    gap: 7px;
    width: 298px;
    height: 12px;
    padding: 0 4px 4px 3px;
    background: linear-gradient(#5c5c5c, #484848);
}
.play {
    border: 3px solid transparent;
    border-left: 3px solid #ddd;
    border-right: none;
}
.search {
    width: 118px;
    height: 12px;
    margin-left: -4px;
    background: #757575;
    font-style: italic;
}
.search::placeholder {
    color: #bbb;
}
.info svg {
    width: 11px;
    height: 11px;
}
.login {
    display: flex;
    align-items: center;
    gap: 4px;
    margin-right: 32px;
}
.help {
    width: 10px;
    height: 10px;
    border-radius: 5px;
    background: #e8eef6;
    color: #274f91;
    font-weight: bold;
    line-height: 10px;
}
.window-buttons {
    display: flex;
    align-items: center;
    justify-content: space-around;
    width: 108px;
    height: 12px;
    padding: 0 0 6px 16px;
}
.window-buttons svg {
    width: 8px;
    height: 8px;
}

/* ribbon */
.ribbon-tabs {
    position: relative;
    display: flex;
    flex: none;
    height: 14px;
    padding-left: 24px;
    border-top: 1px solid #333;
    background: #4d4d4d;
    line-height: 13px;
}
.ribbon-tabs a {
    padding: 0 6px 0 7px;
}
.ribbon-tabs .active {
    padding-right: 7px;
    background: #6b6b6b;
}
.ribbon-tabs .hover {
    background: #5c5c5c;
    color: #fff;
}
.cam {
    display: flex;
    align-items: center;
    gap: 4px;
    margin-left: 15px;
}
.cam svg {
    width: 11px;
    height: 11px;
}
.cursor {
    position: absolute;
    left: 333px;
    top: 7px;
    z-index: 2;
    width: 7px;
    height: 10px;
}
.ribbon {
    display: flex;
    flex: none;
    height: 70px;
    background: #595959;
}
.panel {
    display: flex;
    flex: none;
    flex-direction: column;
    border-right: 1px solid #484848;
}
.panel-body {
    display: flex;
    flex: 1;
    padding-top: 2px;
}
.panel h2 {
    display: flex;
    align-items: center;
    justify-content: center;
    gap: 6px;
    height: 14px;
    border-bottom: 1px solid #666;
    background: #4f4f4f;
    font-size: 8px;
}
.panel h2 .arrow {
    border-width: 3px 3px 0;
}
.tools {
    display: grid;
    grid-auto-rows: 17px;
    align-content: start;
    align-items: center;
}
.tools .arrow {
    justify-self: center;
}
.text {
    display: flex;
    align-items: center;
    gap: 5px;
}
.text svg {
    width: 12px;
    height: 12px;
}
.big {
    display: flex;
    flex-direction: column;
    align-items: center;
    line-height: 12px;
}
.big svg {
    width: 22px;
    height: 22px;
    margin: 2px 0 3px;
}
.big .arrow {
    margin-top: 2px;
}
.drop {
    display: flex;
    align-items: center;
    height: 15px;
    padding: 0 3px 0 1px;
    border: 1px solid #6c6c6c;
    background: linear-gradient(#3f3f3f, #4d4d4d);
}
.drop svg {
    width: 11px;
    height: 11px;
}
.drop .arrow {
    border-width: 3px 3px 0;
}
.drop select {
    flex: 1;
    min-width: 0;
    appearance: none;
}
.pressed {
    border: 1px solid #7fa3d6;
    background: linear-gradient(#7d9ccb, #38588e);
}
.modeling {
    width: 128px;
}
.modeling .big {
    width: 30px;
}
.modeling .big + .big {
    margin-left: 5px;
}
.modeling .tools {
    grid-template-columns: 16px 24px;
    margin-left: 9px;
}
.mesh {
    width: 47px;
}
.mesh .big {
    width: 28px;
}
.mesh .tools {
    grid-template-columns: 14px;
}
.solid-edit {
    width: 90px;
}
.solid-edit .tools {
    grid-template-columns: 18px 17px 18px 1fr;
}
.draw {
    width: 62px;
}
.draw .tools {
    grid-template-columns: 18px 14px 24px 4px;
}
.modify {
    width: 96px;
}
.modify .tools {
    grid-template-columns: 18px 16px 18px 18px 16px 8px;
}
.section {
    width: 40px;
}
.section .panel-body {
    justify-content: center;
}
.section h2 {
    gap: 4px;
}
.coords {
    width: 98px;
}
.coords .tools {
    grid-template-columns: 20px 6px 18px 18px 18px 16px;
}
.coords .drop {
    grid-column: span 4;
}
.view {
    width: 77px;
}
.view .tools {
    padding-left: 2px;
    padding-right: 1px;
}
.select {
    width: 114px;
}
.select .panel-body {
    padding-left: 2px;
}
.select .big {
    width: 42px;
}
.select .big + .big {
    margin-left: 2px;
}
.select .pressed {
    width: 26px;
    height: 51px;
}
.select .pressed svg {
    margin-top: 1px;
}
.select .panel-body > .arrow {
    align-self: flex-end;
    margin-left: -4px;
    margin-bottom: 14px;
}
.layer {
    width: 169px;
}
.layer .big {
    width: 29px;
}
.layer .tools {
    grid-template-columns: 16px 16px 16px 16px 1fr;
    width: 137px;
}
.layer .drop {
    grid-column: span 5;
    gap: 3px;
}
.swatch {
    width: 9px;
    height: 9px;
    background: #fff;
}
.group {
    width: 45px;
}
.group .panel-body {
    padding-left: 3px;
}
.group .big {
    width: 22px;
}
.group .tools {
    width: 17px;
    margin-left: 2px;
}
.group .ico {
    height: 15px;
}
.base {
    flex: 1;
    border-right: none;
}
.base .panel-body {
    justify-content: center;
}
.base h2 {
    gap: 4px;
}

/* drawing tabs */
.file-tabs {
    display: flex;
    flex: none;
    align-items: flex-end;
    gap: 3px;
    height: 20px;
    padding-left: 8px;
    border-bottom: 4px solid #555;
    background: #383838;
}
.file-tabs a {
    width: 82px;
    height: 15px;
    padding-left: 8px;
    border-radius: 8px 8px 0 0;
    background: #484848;
    color: #aaa;
    line-height: 17px;
}
.file-tabs .active {
    display: flex;
    justify-content: space-between;
    padding-right: 8px;
    padding-left: 5px;
    background: linear-gradient(#777, #555);
    color: #eee;
}
.file-tabs .active span {
    color: #444;
}
.file-tabs button {
    width: 16px;
    height: 13px;
    border-radius: 6px 6px 0 0;
    background: #505050;
    font-size: 12px;
}

/* workspace */
.workspace {
    display: flex;
    flex: 1;
    min-height: 0;
}
.canvas {
    position: relative;
    flex: 1;
    background: #000;
}
.doc-buttons {
    position: absolute;
    top: 6px;
    right: 7px;
    display: flex;
    gap: 5px;
}
.doc-buttons svg {
    width: 8px;
    height: 8px;
}
.viewcube {
    position: absolute;
    top: 23px;
    right: 9px;
    display: grid;
    grid-template-areas: ". north ." "west top east" ". south .";
    grid-template-columns: 14px 50px 14px;
    grid-template-rows: 20px 47px 20px;
    align-items: center;
    justify-items: center;
    color: #b0b0b0;
    font-size: 11px;
}
.viewcube::before {
    content: "";
    position: absolute;
    top: 7px;
    left: 3px;
    width: 72px;
    height: 72px;
    border: 8px solid #2e2e2e;
    border-radius: 50%;
}
.viewcube span, .viewcube button {
    position: relative;
}
.north {
    grid-area: north;
}
.west {
    grid-area: west;
}
.east {
    grid-area: east;
}
.south {
    grid-area: south;
}
.top {
    grid-area: top;
    width: 30px;
    height: 31px;
    background: #aeb0b1;
    color: #444;
    font-size: 18px;
    line-height: 30px;
}
.wcs {
    position: absolute;
    top: 119px;
    right: 33px;
    display: flex;
    align-items: center;
    justify-content: space-between;
    width: 31px;
    height: 12px;
    padding: 0 3px;
    border: 1px solid #a4a4ae;
    border-radius: 3px;
    background: #85858e;
    color: #44444c;
}
.wcs span {
    width: 6px;
    height: 5px;
    border: 1px solid #aaaab2;
}
.navbar {
    position: absolute;
    top: 148px;
    right: 2px;
    display: flex;
    flex-direction: column;
    justify-content: space-around;
    align-items: center;
    width: 22px;
    height: 146px;
    padding-bottom: 8px;
    border-radius: 2px;
    border-top: 4px solid #4d4d4d;
    background: #424242;
}
.navbar svg {
    width: 17px;
    height: 17px;
}
.ucs-icon {
    position: absolute;
    left: 275px;
    top: 250px;
    width: 50px;
    height: 54px;
}
.hint {
    position: absolute;
    left: 394px;
    top: 109px;
    width: 214px;
    height: 108px;
    padding: 11px 20px;
    border: 1px solid #a3d0fb;
    background: #85c0fc;
    color: #fff;
    font: bold 16px/28px "Noto Sans CJK SC", sans-serif;
    white-space: nowrap;
}
.hint-title {
    padding-left: 20px;
}
.command {
    position: absolute;
    left: 173px;
    right: 178px;
    bottom: 1px;
    display: flex;
    align-items: center;
    height: 18px;
    background: #414141;
}
.grip {
    width: 5px;
    height: 14px;
    margin-right: 3px;
    border-right: 1px dotted #777;
    border-left: 1px dotted #777;
}
.command button svg {
    width: 9px;
    height: 9px;
    margin-right: 5px;
}
.command-line {
    display: flex;
    flex: 1;
    align-items: center;
    gap: 4px;
    height: 18px;
    padding: 0 4px;
    background: #b1b1b1;
}
.command-line svg {
    width: 10px;
    height: 10px;
}
.command-line .arrow {
    border-top-color: #555;
}
.command-line input {
    flex: 1;
    color: #333;
    font-style: italic;
}
.command-line input::placeholder {
    color: #777;
}

/* tool palette */
.palette {
    display: flex;
    flex-direction: column;
    width: 123px;
    padding: 2px 0 0 4px;
    background: #5b5b5b;
}
.palette h2 {
    flex: none;
    height: 15px;
    margin-left: 15px;
    padding-left: 10px;
    background: #505050;
    color: #e8e8e8;
    font-size: 9px;
    line-height: 15px;
}
.palette-body {
    display: flex;
    flex: 1;
    min-height: 0;
    padding-top: 1px;
    overflow: hidden;
}
.palette-tabs {
    flex: none;
    width: 15px;
    border-right: 1px solid #444;
}
.palette-tabs a {
    display: block;
    width: 15px;
    height: 35px;
    border-top: 1px solid #444;
    background: #505050;
    color: #b5b5b5;
    line-height: 15px;
    text-align: center;
    text-orientation: sideways;
    writing-mode: vertical-rl;
    transform: rotate(180deg);
}
.palette-tabs .active {
    background: #5b5b5b;
    color: #fff;
}
.palette li {
    display: flex;
    align-items: center;
    gap: 4px;
    height: 29px;
    padding-left: 3px;
    color: #f0f0f0;
}
.palette li svg {
    width: 20px;
    height: 22px;
}

/* status bar */
.statusbar {
    display: flex;
    flex: none;
    height: 15px;
    background: #3b3b3b;
}
.layout-tabs {
    display: flex;
    width: 213px;
    gap: 2px;
    padding-left: 3px;
}
.layout-tabs a {
    height: 13px;
    padding: 0 7px;
    border-radius: 0 0 6px 6px;
    background: #4a4a4a;
    color: #999;
    line-height: 13px;
}
.layout-tabs .active {
    background: #888;
    color: #fff;
    font-weight: bold;
}
.status {
    display: flex;
    flex: 1;
    align-items: center;
    padding-top: 3px;
    border-left: 1px solid #666;
    background: #505050;
}
.position {
    width: 103px;
    padding-left: 12px;
    color: #eee;
    font-family: Roboto, sans-serif;
    white-space: nowrap;
}
.status button {
    display: flex;
    justify-content: center;
    width: 16px;
    color: #ccc;
}
.status svg {
    width: 12px;
    height: 12px;
}
.status .arrow {
    margin: 0 3px 0 4px;
}
.status .model {
    width: 20px;
    color: #fff;
    font-weight: bold;
}
.status .on {
    color: #2a80dc;
}
.ratio {
    padding-left: 3px;
}
.status .customize {
    width: 12px;
    margin-left: auto;
}

/* overlays */
.watermark {
    position: absolute;
    left: 30px;
    top: 25px;
    z-index: 3;
    display: flex;
    align-items: center;
    color: #fff;
    font: italic bold 26px/38px "Noto Sans CJK SC", sans-serif;
    -webkit-text-stroke: 4px #222;
    paint-order: stroke fill;
}
.watermark svg {
    position: relative;
    z-index: 1;
    width: 18px;
    height: 24px;
}
.site-logo {
    position: absolute;
    right: 10px;
    bottom: 0;
    z-index: 3;
    display: flex;
    align-items: center;
    gap: 3px;
    width: 269px;
    height: 134px;
    padding-left: 25px;
    background: #fff;
    color: #111;
}
.site-logo svg {
    width: 70px;
    height: 58px;
}
.site-logo strong, .site-logo a {
    display: block;
    white-space: nowrap;
}
.site-logo strong {
    font: 900 29px/32px "Noto Sans CJK SC", sans-serif;
    font-style: oblique 6deg;
}
.site-logo a {
    font: italic 600 19px/20px "Open Sans", sans-serif;
}
```
